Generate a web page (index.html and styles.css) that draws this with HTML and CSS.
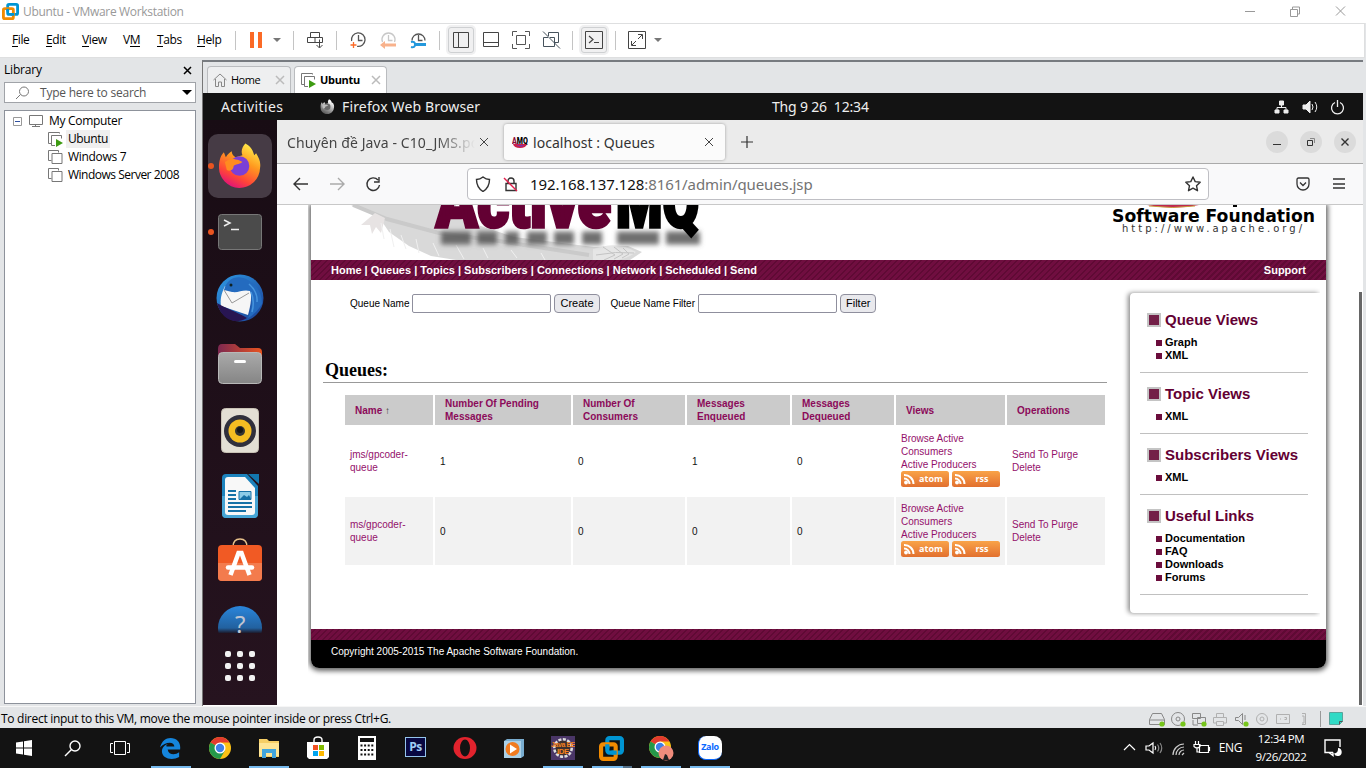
FILE: index.html
```html
<!DOCTYPE html>
<html lang="en">
<head>
<meta charset="utf-8">
<title>Ubuntu - VMware Workstation</title>
<link rel="stylesheet" href="styles.css">
</head>
<body>
<svg class="defs" width="0" height="0">
  <defs>
    <linearGradient id="orange" x1="0" y1="0" x2="0" y2="1"><stop offset="0" stop-color="#f9a348"/><stop offset="1" stop-color="#e2702f"/></linearGradient>
    <linearGradient id="fox" x1=".8" y1="0" x2=".3" y2="1"><stop offset="0" stop-color="#fff44f"/><stop offset=".4" stop-color="#ff9a1f"/><stop offset=".75" stop-color="#ff4538"/><stop offset="1" stop-color="#e0107c"/></linearGradient>
    <linearGradient id="bird" x1="0" y1="0" x2="1" y2="1"><stop offset="0" stop-color="#2f9be6"/><stop offset="1" stop-color="#1a3f95"/></linearGradient>
    <linearGradient id="folder" x1="0" y1="0" x2="1" y2="0"><stop offset="0" stop-color="#7d2850"/><stop offset="1" stop-color="#e95420"/></linearGradient>
    <linearGradient id="fade" x1="0" y1="0" x2="0" y2="1"><stop offset="0" stop-color="#2a86dc"/><stop offset=".5" stop-color="#22619f"/><stop offset=".62" stop-color="#1c1726"/></linearGradient>
    <linearGradient id="steel" x1="0" y1="0" x2="0" y2="1"><stop offset="0" stop-color="#aaa"/><stop offset="1" stop-color="#858585"/></linearGradient>
    <filter id="soft" filterUnits="userSpaceOnUse" x="100" y="0" width="320" height="60"><feGaussianBlur stdDeviation="2.8"/></filter>
    <symbol id="vmware" viewBox="0 0 24 24"><g fill="none" stroke-width="4"><rect x="8" y="2" width="14" height="14" rx="2" stroke="#0095d3"/><rect x="2" y="8" width="14" height="14" rx="2" stroke="#f38b00"/><path d="M8 12V8M12 16h5" stroke="#0095d3"/></g></symbol>
    <symbol id="vm" viewBox="0 0 15 15"><path d="M3.500 10.500H.5V.5h10v2M4 3.500h10v10H4z" fill="none" stroke="#777"/></symbol>
    <symbol id="vmrun" viewBox="0 0 15 15"><path d="M3.500 11.500H.5V.5h11v1M7 13.500H3.500V3.500h10v3" fill="none" stroke="#777"/><path d="M8 7l7 4-7 4z" fill="#3d9b12"/></symbol>
    <symbol id="feed" viewBox="0 0 48 16"><rect width="48" height="16" rx="2.500" fill="url(#orange)"/><circle cx="5" cy="11.500" r="1.900" fill="#fff"/><path d="M3 7.500a5.500 5.500 0 015.500 5.500M3 4a9 9 0 019.500 9" fill="none" stroke="#fff" stroke-width="2"/></symbol>
    <symbol id="chrome" viewBox="0 0 24 24"><circle cx="12" cy="12" r="11" fill="#fbc116"/><path d="M12 12L2.500 6.500A11 11 0 0121.500 6.500H12z" fill="#e33b2e"/><path d="M2.500 6.500A11 11 0 0012 23l4.800-8.200L12 12z" fill="#24984a"/><circle cx="12" cy="12" r="5.500" fill="#fff"/><circle cx="12" cy="12" r="4.200" fill="#3f7fe8"/></symbol>
    <symbol id="firefox" viewBox="0 0 44 46"><path d="M27 1c6 3 8 8 9 12l2-2c3 5 5 9 4 15a21 21 0 01-42-1c0-7 2-12 5-15l2 5c2-3 4-5 6-6 0 3 2 5 4 6l7-2c-2-4 0-9 3-12z" fill="url(#fox)"/><circle cx="21" cy="24" r="10" fill="#7b3fd6"/><path d="M6 20c6-5 10-3 14-2l4 2c-4 3-7 2-9 4 0 4-4 6-7 4z" fill="#ff8c20"/></symbol>
  </defs>
</svg>

<header class="titlebar">
  <svg width="17" height="17"><use href="#vmware"/></svg>
  <span class="title">Ubuntu - VMware Workstation</span>
  <svg class="controls" width="116" height="22" fill="none" stroke="#999"><path d="M11 9.500h10M56.500 7.500h7v7h-7zM58.500 7V5h7v7h-2M102 4.500l9 9M111 4.500l-9 9"/></svg>
</header>

<nav class="menubar">
  <ul class="menus"><li><u>F</u>ile</li><li><u>E</u>dit</li><li><u>V</u>iew</li><li>V<u>M</u></li><li><u>T</u>abs</li><li><u>H</u>elp</li></ul>
  <i class="sep"></i>
  <svg width="57" height="30"><path d="M14 7h4v16h-4zM22 7h4v16h-4z" fill="#fb6a26"/><path d="M37 13h8l-4 4z" fill="#777"/></svg>
  <i class="sep"></i>
  <svg width="42" height="30" fill="none" stroke="#444"><path d="M16.500 7.500h9v5h-9zM13.500 12.500h15v5h-15zM21 12.500v5M25.500 14.500v8M22.500 20l3 3 3-3"/></svg>
  <i class="sep"></i>
  <div class="tools">
    <svg width="30" height="30" fill="none" stroke="#555" stroke-width="1.300"><path d="M8.600 16a6.800 6.800 0 1 1 5.500 5.300M15.500 10v5.500h4"/><path d="M10.500 17v6M7.500 20h6" stroke="#fb6a26"/></svg>
    <svg width="30" height="30" fill="none" stroke="#c8c8c8" stroke-width="1.300"><path d="M9.500 17a6.500 6.500 0 1 1 12 0M15.500 10v5.500h4"/><path d="M11 20h12" stroke="#f8b28c" stroke-width="3"/><path d="M12 16l-5 4 5 4z" fill="#f8b28c" stroke="none"/></svg>
    <svg width="30" height="30" fill="none" stroke="#555" stroke-width="1.300"><path d="M9 15.500a6.500 6.500 0 1 1 13 0M15.500 10v5.500h4"/><path d="M12 19.500h11" stroke="#2498dc" stroke-width="3"/><path d="M8 17q4-1 4 2.500t-4 2.500" stroke="#2498dc" stroke-width="2"/></svg>
  </div>
  <i class="sep"></i>
  <div class="tools">
    <svg class="on" width="30" height="30" fill="none" stroke="#444"><path d="M7.500 7.500h15v15h-15zM12.500 7.500v15"/></svg>
    <svg width="30" height="30" fill="none" stroke="#444"><path d="M7.500 7.500h15v14h-15zM7.500 17.500h15"/></svg>
    <svg width="30" height="30" fill="none" stroke="#555"><path d="M10.500 10.500h9v9h-9zM11 6.500H6.500V11M19 6.500h4.500V11M6.500 19v4.500H11M23.500 19v4.500H19"/></svg>
    <svg width="30" height="30" fill="none" stroke="#46525c"><path d="M12.500 11V7.500h10v10h-3.500M12 12.500H7.500v9h11V16M7 6.500l17 17M14 12.500h4.500V16"/></svg>
  </div>
  <i class="sep"></i>
  <div class="tools">
    <svg class="on" width="30" height="30" fill="none" stroke="#444"><path d="M6.500 6.500h17v17h-17z"/><path d="M10 11l4 3.500-4 3.500M15 17.500h5" stroke-width="1.200"/></svg>
  </div>
  <i class="sep"></i>
  <div class="tools">
    <svg width="30" height="30" fill="none" stroke="#444"><path d="M6.500 6.500h17v17h-17z"/><path d="M16 9.500h4.500V14M20 10l-4 4M14 16l-4 4M9.500 16v4.500H14"/></svg>
    <svg width="14" height="30"><path d="M2 13h8l-4 4z" fill="#777"/></svg>
  </div>
</nav>

<main class="work">
  <aside class="library">
    <div class="libhead"><span>Library</span><svg width="9" height="9" stroke="#000" stroke-width="1.500"><path d="M1 1l7 7M8 1l-7 7"/></svg></div>
    <div class="libsearch"><svg width="14" height="14" fill="none" stroke="#777"><circle cx="8" cy="5.500" r="4.500"/><path d="M4.500 8.500L0 13"/></svg><span>Type here to search</span><svg width="10" height="6"><path d="M0 0h10l-5 5z"/></svg></div>
    <ul class="tree">
      <li class="root"><svg width="29" height="14" fill="none" stroke="#777"><path d="M.5 3.500h8v8h-8z" stroke="#999"/><path d="M2 7.500h5" stroke="#3050a0"/><path d="M16.500 1.500h13v9h-13zM22.500 10.500v2M19 12.500h8"/></svg><span>My Computer</span></li>
      <li><svg width="15" height="15"><use href="#vmrun"/></svg><span class="sel">Ubuntu</span></li>
      <li><svg width="15" height="15"><use href="#vm"/></svg><span>Windows 7</span></li>
      <li><svg width="15" height="15"><use href="#vm"/></svg><span class="server">Windows Server 2008</span></li>
    </ul>
  </aside>

  <section class="vmview">
    <div class="vmtabs">
      <div class="vmtab"><svg width="14" height="14" fill="none" stroke="#888"><path d="M0.500 7L7 1l6.500 6M2.500 6v7.500h3V9h3v4.500h3V6"/></svg><span>Home</span><svg class="x" width="10" height="10" stroke="#bbb" stroke-width="1.500"><path d="M1 1l8 8M9 1L1 9"/></svg></div>
      <div class="vmtab active"><svg width="15" height="15"><use href="#vmrun"/></svg><span>Ubuntu</span><svg class="x" width="10" height="10" stroke="#bbb" stroke-width="1.500"><path d="M1 1l8 8M9 1L1 9"/></svg></div>
    </div>
    <div class="gnome">
      <span class="act">Activities</span>
      <svg width="15" height="15" viewBox="0 0 44 46" class="grey"><use href="#firefox"/></svg>
      <span class="app">Firefox Web Browser</span>
      <span class="clock">Thg 9 26&nbsp; 12:34</span>
      <svg class="tray" width="72" height="16" fill="none" stroke="#eee"><path d="M5.500 2h4v4h-4zM1 11h4v3H1zM10 11h4v3h-4z" fill="#eee"/><path d="M7.500 6v3M3 11V8.500h9V11"/><path d="M29 6h3l4-4v12l-4-4h-3z" fill="#eee"/><path d="M38 5q2 3 0 6M41 3q3.500 5 0 10"/><path d="M61 3.500a6 6 0 105 0M63.500 1v7" stroke-width="1.300"/></svg>
    </div>
    <div class="guest">
      <div class="dock">
        <svg width="74" height="66"><rect x="5" y="1" width="64" height="64" rx="10" fill="#463b45"/><circle cx="8" cy="33" r="3" fill="#e95420"/><svg x="16" y="9" width="43" height="46"><use href="#firefox"/></svg></svg>
        <svg width="74" height="66"><circle cx="8" cy="33" r="3" fill="#e95420"/><rect x="15.500" y="15.500" width="43" height="35" rx="3" fill="#4b4b4b" stroke="#777"/><path d="M21 21l6 3-6 3M28 30.500h8" fill="none" stroke="#eee" stroke-width="1.500"/></svg>
        <svg width="74" height="66"><circle cx="37" cy="33" r="23.500" fill="url(#bird)"/><path d="M22 21l25 4c2 6 1 14-2 25L18 41c-1-6 0-12 4-20z" fill="#f6f6f6"/><path d="M21 25l8 13 17-10" fill="none" stroke="#999"/><path d="M21 25c3-12 14-16 24-10 9 5 14 13 14 24-4 6-8 11-14 14 4-9 6-21 2-27-7-2-11 2-18 1z" fill="#246bbf"/><path d="M46 19q9 8 8 18M48 27q4 9 1 20" fill="none" stroke="#4694dd" stroke-width="1.500"/><path d="M14 38c8 5 18 8 30 15-14 8-26 0-30-15z" fill="#281553"/><circle cx="28" cy="20" r="1.500" fill="#122"/></svg>
        <svg width="74" height="66"><path d="M15 18q0-5 4-5h13l5 4h18q4 0 4 4v20H15z" fill="url(#folder)"/><rect x="15.500" y="21.500" width="43" height="31" rx="4" fill="url(#steel)" stroke="#b8b8b8"/><rect x="31" y="29" width="12" height="3" rx="1.500" fill="#fff"/></svg>
        <svg width="74" height="66"><rect x="18.500" y="11.500" width="37" height="44" rx="4" fill="#e3dfd4" stroke="#c8c2b5"/><circle cx="37" cy="34" r="16" fill="#30303c"/><circle cx="37" cy="34" r="11.500" fill="#f5bd22"/><circle cx="37" cy="34" r="5" fill="#333"/><circle cx="37" cy="33" r="3" fill="#161616"/></svg>
        <svg width="74" height="66"><path d="M19 15q0-4 4-4h21l11 12v27q0 5-4 5H23q-4 0-4-5z" fill="#1c83bd"/><path d="M19 33h36v18q0 4-4 4H23q-4 0-4-4z" fill="#46a5d5"/><path d="M22 17q0-3 3-3h17l10 11v24q0 3-3 3H25q-3 0-3-3z" fill="#f8f8f8"/><path d="M45 11h11v10z" fill="#1377ae"/><path d="M25 28h8M25 32h8M25 36h8M25 40h24M25 44h24M25 48h18" stroke="#1671a6" stroke-width="2"/><path d="M36 28.500h12v8H36z" fill="#8ccce8" stroke="#1671a6"/><path d="M37 36l4-4 3 2 2-2 2 4z" fill="#1671a6"/></svg>
        <svg width="74" height="66"><path d="M30 18q0-8 7-8t7 8" fill="none" stroke="#e8c28c" stroke-width="1.500"/><rect x="15" y="16" width="44" height="36" rx="4" fill="#f15a24"/><path d="M15 34h44v14q0 4-4 4H19q-4 0-4-4z" fill="#f37b4d"/><path d="M27.500 46l8-22h3l8 22" fill="none" stroke="#fff" stroke-width="4.500"/><path d="M25 38.500h24" stroke="#fff" stroke-width="4.500" stroke-linecap="round"/></svg>
        <svg width="74" height="38"><circle cx="37" cy="33" r="22" fill="url(#fade)"/><text x="37" y="38" text-anchor="middle" class="q">?</text></svg>
        <svg class="apps" width="74" height="66" fill="#f2f2f2"><g id="dots"><rect x="22" y="18" width="6" height="6" rx="2"/><rect x="34" y="18" width="6" height="6" rx="2"/><rect x="46" y="18" width="6" height="6" rx="2"/></g><use href="#dots" y="12"/><use href="#dots" y="24"/></svg>
      </div>

      <div class="browser">
        <div class="tabstrip">
          <div class="tab"><span class="cut">Chuyên đề Java - C10_JMS.pdf</span><svg width="8" height="8" stroke="#444"><path d="M0 0l8 8M8 0L0 8"/></svg></div>
          <div class="tab current"><svg class="fav" width="16" height="14"><path d="M1 9h14q-1 4-7 4t-7-4z" fill="#c9204a"/><path d="M4 10h9l-4 2z" fill="#8a2da0"/><text x="0" y="9" textLength="16" lengthAdjust="spacingAndGlyphs"><tspan fill="#8d0c3c">A</tspan>MQ</text></svg><span>localhost : Queues</span><svg class="close" width="8" height="8" stroke="#444"><path d="M0 0l8 8M8 0L0 8"/></svg></div>
          <svg width="12" height="12" stroke="#333" stroke-width="1.200"><path d="M6 0v12M0 6h12"/></svg>
          <svg class="wins" width="92" height="22" fill="none" stroke="#333"><g fill="#dbdbdb" stroke="none"><circle cx="11" cy="11" r="11"/><circle cx="45" cy="11" r="11"/><circle cx="79" cy="11" r="11"/></g><path d="M7 13.500h8M41.500 9.500h5v5h-5z"/><path d="M44 7.500h4.500V12" stroke="#888"/><path d="M75.500 7.500l7 7M82.500 7.500l-7 7" stroke-width="1.400"/></svg>
        </div>
        <div class="addressbar">
          <svg width="90" height="16" fill="none" stroke-width="1.400"><path d="M15 8H1M7 2L1 8l6 6" stroke="#333"/><path d="M37 8h14M45 2l6 6-6 6" stroke="#aaa"/><path d="M85 4a6.300 6.300 0 101.500 5M86 1v5h-5" stroke="#333"/></svg>
          <div class="url">
            <svg width="43" height="16" fill="none" stroke="#333" stroke-width="1.400"><path d="M8 1q3 2.500 6.500 2.500 0 8-6.500 12Q1.500 11.500 1.500 3.500 5 3.500 8 1z"/><path d="M31 7.500h10v7H31zM33 7V5a3 3 0 016 0v2"/><path d="M29 2l13 13" stroke="#e2204d"/></svg>
            <span class="host">192.168.137.128</span><span class="path">:8161/admin/queues.jsp</span>
            <svg class="star" width="18" height="18" fill="none" stroke="#333" stroke-width="1.400"><path d="M9 2l2.200 4.600 5 .6-3.700 3.500 1 5L9 13.200l-4.500 2.500 1-5L1.800 7.200l5-.6z" stroke-linejoin="round"/></svg>
          </div>
          <svg class="right" width="52" height="16" fill="none" stroke="#333" stroke-width="1.300"><path d="M2 3.500q0-1.500 1.500-1.500h9Q14 2 14 3.500V8a6 6 0 01-12 0zM5 6.500l3 3 3-3M38 3h12M38 8h12M38 12h12"/></svg>
        </div>
        <div class="viewport">
          <div class="site">
            <svg class="banner" width="1015" height="55">
              <path d="M40 0h105l-2 12 60 20 80 10 34-1 14 6-12 8H145l-25-4-22-10-20-14-12-18-10-2z" fill="#d9d9d9"/>
              <path d="M42 0l34 14 52 14 60 8 90 14" fill="none" stroke="#cacaca" stroke-width="4"/>
              <path d="M50 20l14-12 10 5-4 15-5-6-4 7-2-9z" fill="#e7e3e3"/>
              <path d="M70 18l3 16M79 24l4 18M90 30l5 14M105 34l3 14M122 38l6 13M145 40l8 14M172 43l5 10M200 45l6 8M230 48l4 7" stroke="#f0f0f0"/>
              <path d="M282 44q25-9 43 3-15 12-43 8z" fill="#e6e6e6"/><path d="M285 50q20-4 38-2M292 42l12 8-11 5M303 42l9 7-9 5M312 43l6 6-7 4" fill="none" stroke="#c4c4c4"/>
              <path d="M130 33h30m6 0h20m8 0h14m8 0h20m7 0h20m8 0h20m15 0h42m7 0h34" fill="none" stroke="#555" stroke-opacity=".85" stroke-width="13" filter="url(#soft)"/>
              <text class="logo" x="125" y="22" textLength="175" lengthAdjust="spacingAndGlyphs" fill="#630033" stroke="#630033">Active</text>
              <text class="logo" x="305" y="22" textLength="83" lengthAdjust="spacingAndGlyphs" fill="#000" stroke="#000">MQ</text>
              <path d="M836 0h52q-26 5-52 0z" fill="#bf2750"/><path d="M838 1q24 3 46 0" fill="none" stroke="#c99a3c"/><path d="M922 0h4v2h-4z"/>
              <text class="asf" x="801" y="17" textLength="203" lengthAdjust="spacingAndGlyphs">Software Foundation</text>
              <text class="asfurl" x="811" y="27" textLength="180">http://www.apache.org/</text>
            </svg>
            <div class="sitenav"><span>Home | Queues | Topics | Subscribers | Connections | Network | Scheduled | Send</span><span>Support</span></div>
            <div class="cols">
              <div class="maincol">
                <form class="forms"><label>Queue Name</label><input type="text"><button type="button">Create</button><label class="second">Queue Name Filter</label><input type="text"><button type="button">Filter</button></form>
                <h2>Queues:</h2>
                <div class="table">
                  <div class="th">Name&nbsp;<b class="up">↑</b></div><div class="th">Number Of Pending<br>Messages</div><div class="th">Number Of<br>Consumers</div><div class="th">Messages<br>Enqueued</div><div class="th">Messages<br>Dequeued</div><div class="th">Views</div><div class="th">Operations</div>
                  <div class="td link">jms/gpcoder-<br>queue</div><div class="td">1</div><div class="td">0</div><div class="td">1</div><div class="td">0</div>
                  <div class="td link views">Browse Active<br>Consumers<br>Active Producers<div class="feeds"><span class="feed"><svg width="48" height="16"><use href="#feed"/></svg><b>atom</b></span><span class="feed"><svg width="48" height="16"><use href="#feed"/></svg><b>rss</b></span></div></div>
                  <div class="td link">Send To Purge<br>Delete</div>
                  <div class="td alt link">ms/gpcoder-<br>queue</div><div class="td alt">0</div><div class="td alt">0</div><div class="td alt">0</div><div class="td alt">0</div>
                  <div class="td alt link views">Browse Active<br>Consumers<br>Active Producers<div class="feeds"><span class="feed"><svg width="48" height="16"><use href="#feed"/></svg><b>atom</b></span><span class="feed"><svg width="48" height="16"><use href="#feed"/></svg><b>rss</b></span></div></div>
                  <div class="td alt link">Send To Purge<br>Delete</div>
                </div>
              </div>
              <aside class="panel">
                <section><h3>Queue Views</h3><ul><li>Graph</li><li>XML</li></ul></section>
                <section><h3>Topic Views</h3><ul><li>XML</li></ul></section>
                <section><h3>Subscribers Views</h3><ul><li>XML</li></ul></section>
                <section><h3>Useful Links</h3><ul><li>Documentation</li><li>FAQ</li><li>Downloads</li><li>Forums</li></ul></section>
              </aside>
            </div>
            <div class="stripe"></div>
            <footer class="copy">Copyright 2005-2015 The Apache Software Foundation.</footer>
          </div>
          <div class="scroll"></div>
        </div>
      </div>
    </div>
  </section>
</main>

<div class="status">
  <span>To direct input to this VM, move the mouse pointer inside or press Ctrl+G.</span>
  <svg width="196" height="18" fill="none" stroke="#888"><path d="M.5 9.500l3-6h9l3 6v5H.5zM.5 10h15"/><circle cx="29" cy="9" r="6.500"/><circle cx="29" cy="9" r="2"/><path d="M43.500 3.500h8v5h-8zM48.500 7.500h8v6h-8zM44 10v5h5" /><g stroke="#b0b0b0"><path d="M67.500 7V3.500h7V7M67 13h-2.500V7.500h13V13H75M67.500 11.500h7v4h-7z"/><circle cx="113" cy="9" r="5.500"/><circle cx="113" cy="9" r="2"/><path d="M127.500 4.500h13v9h-13zM131 9h1M135.500 7.500h2v2h-2M153 3.500h3.500v11H153M153 6h2v7h-2"/></g><path d="M86.500 7.500h3l4-4v11l-4-4h-3zM96 5v5"/><path d="M171.500 1v16" stroke="#999"/><path d="M180.500 2.500h13v9l-3 3h-10z" fill="#30dac5" stroke="#5aa39b"/><path d="M190.500 14.500v-3h3" stroke="#555"/><g fill="#76c51b" stroke="none"><circle cx="13" cy="14" r="2.600"/><circle cx="34" cy="14" r="2.600"/><circle cx="55" cy="14" r="2.600"/><circle cx="97" cy="14" r="2.600"/></g></svg>
</div>

<footer class="taskbar">
  <div class="slot"><svg width="16" height="16" fill="#fff"><path d="M0 2.500l7-1v6H0zM8 1.300L16 0v7.500H8zM0 8.500h7v6l-7-1zM8 8.500h8V16l-8-1.200z"/></svg></div>
  <div class="slot"><svg width="17" height="17" fill="none" stroke="#fff" stroke-width="1.400"><circle cx="11" cy="6" r="5"/><path d="M7.500 9.500L1 16"/></svg></div>
  <div class="slot"><svg width="20" height="16" fill="none" stroke="#fff"><path d="M4.500 1.500h11v13h-11zM3 3.500H.5v9H3M17 3.500h2.500v9H17"/></svg></div>
  <div class="slot app open"><svg width="22" height="22" viewBox="1 0 23 23"><path d="M1 11C3 4 7 1 12 1c7 0 11 5 10 12H9c1 6 8 6 12 3v5C14 25 3 23 3 15c0-4 3-7 7-8-2 1-3 2-2 3h8c0-6-10-5-15 1z" fill="#1585dc"/></svg></div>
  <div class="slot app"><svg width="24" height="24"><use href="#chrome"/></svg></div>
  <div class="slot app open"><svg width="24" height="22"><path d="M2 2h8l2 2h10v16H2z" fill="#f6ce65"/><path d="M2 6h20v13H2z" fill="#ffe595"/><path d="M5 12h14v9h-4v-5H9v5H5z" fill="#42a5dc"/></svg></div>
  <div class="slot app"><svg width="24" height="24"><path d="M8 7V4q0-3 4-3t4 3v3" fill="none" stroke="#fff" stroke-width="1.400"/><path d="M1 6h22v15l-2 2H3l-2-2z" fill="#fff"/><path d="M7 9h5v5H7z" fill="#f25022"/><path d="M13 9h5v5h-5z" fill="#7fba00"/><path d="M7 15h5v5H7z" fill="#00a4ef"/><path d="M13 15h5v5h-5z" fill="#ffb900"/></svg></div>
  <div class="slot app"><svg width="18" height="24"><path d="M0 0h18v24H0z" fill="#fff"/><path d="M2 2h14v4H2z" fill="#111"/><path d="M2.500 9.500h13M2.500 14h13M2.500 18.500h13" stroke="#111" stroke-width="2" stroke-dasharray="2 1.600"/></svg></div>
  <div class="slot app"><div class="ps">Ps</div></div>
  <div class="slot app"><svg width="24" height="24"><ellipse cx="12" cy="12" rx="11.500" ry="11" fill="#e2232d"/><ellipse cx="12" cy="12" rx="5" ry="8.500" fill="#131313"/></svg></div>
  <div class="slot app"><svg width="22" height="22"><path d="M4 2h17v17l-3 2H1V4z" fill="#79add0"/><path d="M1 4h17v17H1z" fill="#abd0e6"/><circle cx="9.500" cy="12" r="7" fill="#f17b20"/><path d="M7 7.500l7 4.500-7 4.500z" fill="#fff"/></svg></div>
  <div class="slot app open"><svg width="24" height="24"><path d="M0 0h24v24H0z" fill="#4a3667"/><circle cx="12" cy="12" r="8.500" fill="none" stroke="#ddd" stroke-width="3" stroke-dasharray="3 1.400"/><circle cx="12" cy="12" r="7.500" fill="#3d3030"/><text class="ide" x="0" y="11" textLength="24" lengthAdjust="spacingAndGlyphs">Java EE</text><text class="ide" x="6" y="18" textLength="12" lengthAdjust="spacingAndGlyphs">IDE</text></svg></div>
  <div class="slot app open double"><svg width="25" height="25"><use href="#vmware"/></svg></div>
  <div class="slot app open"><svg width="26" height="26"><svg width="24" height="24"><use href="#chrome"/></svg><circle cx="18" cy="18" r="7.500" fill="#f08c7c"/><path d="M15 25l2-6 2 1 2 5z" fill="#222"/></svg></div>
  <div class="slot app open"><div class="zalo">Zalo</div></div>
  <svg class="systray" width="92" height="20" fill="none" stroke="#fff" stroke-width="1.200"><path d="M3 12l5.500-5.500L14 12M25 8h3l4-3v10l-4-3h-3z"/><path d="M34 8q1.500 2 0 4"/><path d="M36.500 6.500q2.500 3.500 0 7M39 5q3.500 5 0 10" stroke="#888"/><path d="M52 17A11 11 0 0163 6M55 17a8 8 0 018-8M58 17a5 5 0 015-5M61 17l2-2" stroke="#ccc"/><path d="M78.500 7.500h9v7h-9zM88.500 9v4M74.500 3v3M77.500 3v3M73 6.500h6v2q-3 3-6 0zM76 10v4h2"/></svg>
  <span class="lang">ENG</span>
  <div class="time">12:34 PM<br>9/26/2022</div>
  <svg class="note" width="18" height="18" fill="none" stroke="#fff" stroke-width="1.400"><path d="M9 13.500H1V1h15v7"/><path d="M5 13.500l4 3v-3"/><path d="M14 9a4 4 0 11-4 5.500q4.500-.5 4-5.500z" fill="#fff" stroke="none"/></svg>
</footer>
</body>
</html>
```
FILE: styles.css
```css
*, *::before { box-sizing: border-box; }
body { margin: 0; width: 1366px; height: 768px; overflow: hidden; display: flex; flex-direction: column; background: #e3e5e7; color: #000; font: 12px/18px "Open Sans", "Noto Sans", sans-serif; letter-spacing: -0.4px; }
ul { list-style: none; margin: 0; padding: 0; }
svg { display: block; flex: none; }
.defs { position: absolute; }

.titlebar { height: 23px; background: #fff; display: flex; padding: 3px 8px 0 2px; color: #999; }
.title { margin-left: 4px; line-height: 18px; letter-spacing: -0.32px; }
.controls { margin: -1px 8px 0 auto; }

.menubar { height: 35px; background: #fff; border: 1px solid #dedfe0; border-left: 0; display: flex; align-items: center; margin-right: 1px; padding-bottom: 1px; }
.menus { display: flex; padding-left: 12px; width: 235px; }
.menus u { text-decoration: none; background: linear-gradient(#000, #000) 0 15px / 100% 1px no-repeat; }
.menus li:nth-child(1) { width: 34px; }
.menus li:nth-child(2) { width: 36px; }
.menus li:nth-child(3) { width: 41px; }
.menus li:nth-child(4) { width: 34px; }
.menus li:nth-child(5) { width: 40px; }
.sep { width: 1px; height: 19px; background: #c4c4c4; }
.tools { display: flex; padding: 0 6px; }
.on { background: #f0f0f1; border-radius: 5px; outline: 1px solid #ced0d2; outline-offset: -3px; }

.work { flex: 1; display: flex; min-height: 0; }
.library { width: 202px; padding: 0 6px 2px 4px; display: flex; flex-direction: column; }
.libhead { display: flex; justify-content: space-between; align-items: center; height: 24px; padding-right: 4px; letter-spacing: -0.2px; }
.libsearch { height: 21px; background: #fff; border: 1px solid #a0a3a8; display: flex; align-items: center; padding: 0 3px 0 11px; color: #555; letter-spacing: -0.22px; }
.libsearch span { flex: 1; margin-left: 10px; }
.tree { flex: 1; margin-top: 7px; background: #fff; border: 1px solid #8d929b; padding: 1px 0 0 43px; }
.tree li { display: flex; align-items: center; height: 18px; gap: 5px; letter-spacing: -0.3px; }
.tree .root { margin-left: -35px; gap: 7px; }
.tree .root svg { overflow: visible; }
.tree .sel { background: #efefef; padding: 0 2px; margin: 0 -2px; letter-spacing: -0.4px; }
.tree .server { letter-spacing: -0.5px; }

.vmview { width: 1161px; margin: 2px 0 0; display: flex; flex-direction: column; border-left: 1px solid #777; border-top: 2px solid #777b80; }
.vmtabs { height: 31px; display: flex; padding: 4px 0 0 4px; gap: 3px; }
.vmtab { width: 84px; border: 1px solid #babcbf; border-bottom: 0; border-radius: 4px 4px 0 0; background: #eeeff0; display: flex; align-items: center; padding: 0 5px; gap: 4px; font-size: 11px; letter-spacing: -0.5px; }
.vmtab .x { margin-left: auto; }
.vmtab.active { width: 93px; background: #fff; font-weight: 700; letter-spacing: -0.3px; padding-left: 6px; }
.gnome { height: 27px; background: #131313; color: #eee; display: flex; align-items: center; padding: 0 17px 0 18px; font: 14px/27px "Noto Sans", sans-serif; letter-spacing: 0; }
.gnome .act { width: 99px; letter-spacing: 0.4px; }
.grey { filter: grayscale(1) brightness(1.2); }
.gnome .app { margin-left: 7px; width: 430px; letter-spacing: 0.15px; }
.gnome .clock { letter-spacing: -0.18px; }
.gnome .tray { margin-left: auto; }

.guest { flex: 1; display: flex; min-height: 0; border-bottom: 1px solid #fff; }
.dock { width: 74px; background: linear-gradient(#180c14, #26131f); padding-top: 13px; overflow: hidden; }
.dock .q { font: 24px "Noto Sans", sans-serif; fill: #bfc5d2; }
.browser { width: 1086px; display: flex; flex-direction: column; background: #fff; letter-spacing: 0; }
.tabstrip { height: 44px; flex: none; background: #ebebeb; border-bottom: 1px solid #aaa; display: flex; align-items: center; font: 14px/20px "Noto Sans", sans-serif; color: #333; padding: 1px 5px 0 0; }
.tab { width: 227px; height: 38px; display: flex; align-items: center; padding: 0 16px 0 10px; }
.tab span { padding-top: 1px; }
.cut { width: 188px; margin-right: 5px; overflow: hidden; white-space: nowrap; color: #444; letter-spacing: 0.1px; -webkit-mask-image: linear-gradient(90deg, #000 150px, transparent 188px); mask-image: linear-gradient(90deg, #000 150px, transparent 188px); }
.tab.current { width: 221px; height: 36px; background: #fbfbfb; border-radius: 3px; box-shadow: 0 0 3px #999; margin-right: 16px; padding: 0 12px 0 8px; letter-spacing: 0.05px; }
.fav { margin-right: 5px; }
.fav text { font: 900 9px Roboto, sans-serif; }
.close { margin-left: auto; }
.wins { margin-left: auto; }
.addressbar { height: 41px; flex: none; background: #f9f9fa; border-bottom: 1px solid #c8c8c8; display: flex; align-items: center; padding: 0 16px; }
.url { margin-left: 84px; width: 742px; height: 32px; border: 1px solid #bfbfc4; border-radius: 4px; background: #fff; display: flex; align-items: center; padding-left: 7px; font: 15px/30px "Noto Sans", sans-serif; letter-spacing: -0.05px; }
.host { margin-left: 12px; color: #111; }
.path { color: #737373; letter-spacing: -0.1px; }
.star { margin: 0 6px 0 auto; }
.addressbar .right { margin-left: auto; margin-right: 0; }

.viewport { flex: 1; display: flex; min-height: 0; overflow: hidden; padding-left: 34px; font: 10px/13px "Liberation Sans", Arial, sans-serif; }
.site { width: 1015px; height: 463px; box-shadow: 0 1px 5px 2px #666; border-radius: 0 0 8px 8px; background: #fff; clip-path: inset(0 -10px -12px -3px); }
.logo { font: 900 72px Roboto, sans-serif; stroke-width: 3.5; }
.asf { font: 700 17px "DejaVu Sans", sans-serif; }
.asfurl { font: 10px "DejaVu Sans", sans-serif; fill: #333; }
.sitenav { height: 20px; display: flex; justify-content: space-between; padding: 0 20px; color: #fff; font-weight: 700; font-size: 11px; line-height: 20px; }
.sitenav, .stripe { background: repeating-linear-gradient(135deg, #700e40 0 2.500px, #5f0a34 2.500px 4.240px); }
.cols { height: 349px; display: flex; }
.maincol { width: 796px; margin-right: 23px; padding: 14px 0 0 12px; }
.forms { display: flex; align-items: center; height: 19px; padding-left: 27px; }
.forms input { width: 139px; height: 19px; border: 1px solid #8f8f9d; border-radius: 2px; margin: 0 3px; padding: 0; }
.forms button { height: 19px; border: 1px solid #8f8f9d; border-radius: 4px; background: #e9e9ed; padding: 0 5px; font: 11px/13px "Liberation Sans", Arial, sans-serif; }
.forms .second { margin-left: 11px; }
h2 { font: 700 18px/24px "Liberation Serif", "Times New Roman", serif; margin: 45px 0 12px; padding-left: 2px; height: 25px; border-bottom: 1px solid #999; }
.table { display: grid; grid-template-columns: 88px 136px 112px 103px 102px 109px 98px; grid-template-rows: 30px 68px 68px; gap: 2px; margin-left: 22px; }
.th { background: #cbcbcb; color: #8b0a5a; font-weight: 700; padding: 2px 10px; display: flex; align-items: center; }
.up { color: #333; font-weight: 400; }
.td { padding: 0 5px; display: flex; align-items: center; color: #111; }
.td.alt { background: #f2f2f2; }
.td.link { color: #94106b; }
.td.views { display: block; padding-top: 5px; white-space: nowrap; }
.feeds { display: flex; gap: 3px; }
.feed { display: grid; width: 48px; height: 16px; }
.feed > * { grid-area: 1 / 1; }
.feed b { font: 700 9px/15px "Open Sans", sans-serif; color: #fff; padding-left: 12px; text-align: center; }
.panel { width: 190px; height: 320px; margin-top: 13px; padding: 6px 12px 0 10px; border-radius: 4px 0 0 4px; box-shadow: -2px 0 5px #888; clip-path: inset(-6px 0 -4px -9px); background: #fff; -webkit-mask: none; }
.panel section { border-bottom: 1px solid #c0c0c0; padding: 11px 0 10px 7px; }
.panel h3 { margin: 0 0 6px; font-size: 15px; line-height: 20px; color: #630033; display: flex; align-items: center; gap: 4px; white-space: nowrap; }
.panel h3::before { content: ""; width: 14px; height: 14px; border: 2px solid #c4c4c4; background: #732048; flex: none; }
.panel li { font-weight: 700; font-size: 11px; line-height: 13px; padding-left: 9px; display: flex; align-items: center; gap: 3px; }
.panel li::before { content: ""; width: 6px; height: 6px; background: #6b0d3c; margin-top: 1px; }
.stripe { height: 11px; }
.copy { height: 28px; background: #000; border-radius: 0 0 8px 8px; color: #fff; padding: 5px 20px; }
.scroll { width: 3px; margin: 87px 0 0 33px; background: #666; }

.status { height: 22px; display: flex; align-items: center; justify-content: space-between; padding: 2px 21px 0 1px; border-top: 1px solid #f6f6f6; letter-spacing: -0.29px; }
.taskbar { height: 40px; background: #131313; color: #fff; display: flex; align-items: center; }
.slot { width: 48px; height: 40px; display: flex; align-items: center; justify-content: center; }
.slot:nth-child(3) { margin-right: 2px; }
.slot.app { width: 49px; }
.slot.open { background: linear-gradient(#76b9ed, #76b9ed) center bottom / 40px 2px no-repeat; }
.slot.double { background-image: linear-gradient(90deg, #76b9ed 31px, #54718a 31px); }
.ps { width: 21px; height: 20px; border: 1px solid #94c5ec; background: #080842; color: #a0cdf5; font: 700 12px/17px "Open Sans", sans-serif; text-align: center; margin-bottom: 3px; }
.ide { font: 700 8px "Liberation Sans", sans-serif; fill: #f5821f; }
.zalo { width: 24px; height: 24px; border-radius: 8px; background: #fff; border-left: 1px solid #0a68ff; border-bottom: 1px solid #0a68ff; color: #0a68ff; font: 700 9px/22px "Open Sans", sans-serif; text-align: center; }
.systray { margin-left: auto; }
.lang { margin: 0 10px 0 6px; }
.time { text-align: center; font-size: 11.5px; width: 58px; margin-top: -1px; }
.note { margin: 0 24px 0 14px; }
```
